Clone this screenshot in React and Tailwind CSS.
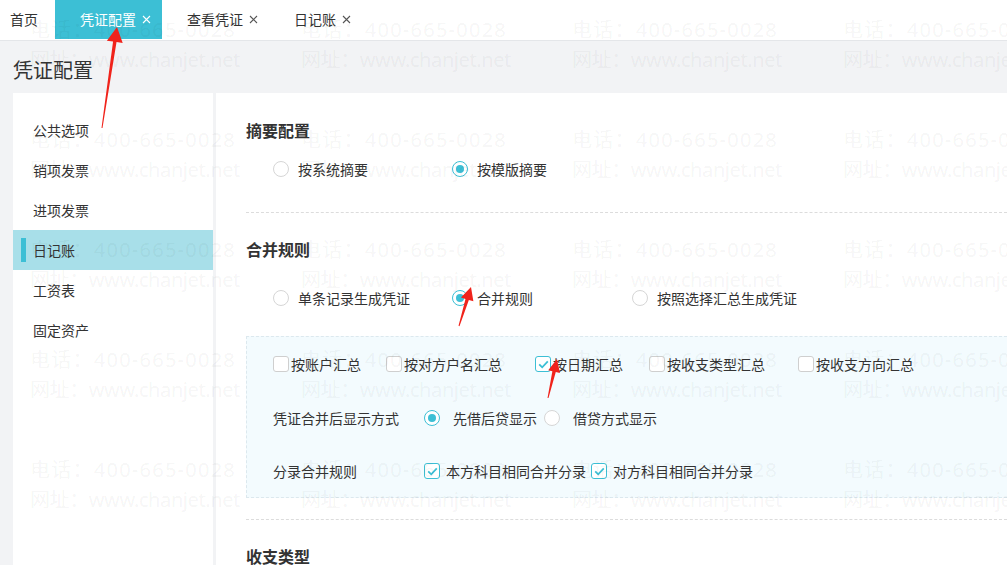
import React from 'react';

const CYAN = '#3cbfd5';

const Close = ({ color = '#555' }) => (
  <svg width="9" height="9" viewBox="0 0 9 9" className="ml-[6px]">
    <path d="M1 1L8 8M8 1L1 8" stroke={color} strokeWidth="1.1" />
  </svg>
);

const Radio = ({ checked }) => (
  <span
    className={`flex h-[16px] w-[16px] shrink-0 items-center justify-center rounded-full border bg-white ${
      checked ? 'border-[#3cbfd5]' : 'border-[#d6d6d6]'
    }`}
  >
    {checked && <span className="h-[8px] w-[8px] rounded-full bg-[#3cbfd5]" />}
  </span>
);

const Check = ({ checked }) => (
  <span
    className={`flex h-[16px] w-[16px] shrink-0 items-center justify-center rounded-[3px] border bg-white ${
      checked ? 'border-[#3cbfd5]' : 'border-[#cfcfcf]'
    }`}
  >
    {checked && (
      <svg width="11" height="9" viewBox="0 0 11 9">
        <path d="M1.2 4.4L4.2 7.3L9.8 1.4" fill="none" stroke={CYAN} strokeWidth="1.8" />
      </svg>
    )}
  </span>
);

const RadioOpt = ({ checked, label, w = 'w-[179px]' }) => (
  <div className={`flex items-center ${w}`}>
    <Radio checked={checked} />
    <span className="ml-[9px]">{label}</span>
  </div>
);

// red annotation arrow: tip, base, head length, half head width
const arrowPoints = (tx, ty, bx, by, hl, hw, neck, tail) => {
  const dx = tx - bx;
  const dy = ty - by;
  const len = Math.hypot(dx, dy);
  const ux = dx / len;
  const uy = dy / len;
  const px = -uy;
  const py = ux;
  const nx = tx - ux * hl;
  const ny = ty - uy * hl;
  const pts = [
    [tx, ty],
    [nx + px * hw, ny + py * hw],
    [nx + px * neck * 0.5, ny + py * neck * 0.5],
    [bx + px * tail * 0.5, by + py * tail * 0.5],
    [bx - px * tail * 0.5, by - py * tail * 0.5],
    [nx - px * neck * 0.5, ny - py * neck * 0.5],
    [nx - px * hw, ny - py * hw],
  ];
  return pts.map((p) => p.join(',')).join(' ');
};

const Arrows = () => (
  <svg className="pointer-events-none absolute inset-0" width="1007" height="565">
    <polygon points={arrowPoints(117, 27, 102, 128, 15, 8, 3.5, 1)} fill="#f0231b" />
    <polygon points={arrowPoints(471, 287, 459, 326, 13, 6.5, 3.5, 1)} fill="#f0231b" />
    <polygon points={arrowPoints(557, 359, 548, 398, 13, 6, 3.5, 1)} fill="#f0231b" />
  </svg>
);

const Watermark = () => {
  const cols = [30, 301, 572, 843];
  const rows = [15, 125, 235, 345, 455];
  return (
    <div className="pointer-events-none absolute inset-0 overflow-hidden text-[20px] leading-[30px] text-black/[0.055] [font-family:'Noto_Sans','Noto_Sans_CJK_SC',sans-serif]">
      {rows.map((y) =>
        cols.map((x) => (
          <div key={`${x}-${y}`} className="absolute whitespace-nowrap" style={{ left: x, top: y }}>
            <div className="tracking-[1.25px]">电话：400-665-0028</div>
            <div className="tracking-[-0.4px]">网址：www.chanjet.net</div>
          </div>
        ))
      )}
    </div>
  );
};

const sideItems = ['公共选项', '销项发票', '进项发票', '日记账', '工资表', '固定资产'];

export default function App() {
  return (
    <div className="relative h-[565px] w-[1007px] overflow-hidden bg-[#f2f3f5] text-[14px] text-[#333] [font-family:'Noto_Sans_CJK_SC','Noto_Sans',sans-serif]">
      {/* tabs */}
      <div className="flex h-[41px] items-stretch border-b border-[#e4e6e9] bg-white">
        <div className="flex h-[39px] items-center pl-[10px] pr-[17px]">首页</div>
        <div className="flex h-[39px] items-center bg-[#3cbfd5] pl-[25px] pr-[11px] text-white">
          凭证配置
          <Close color="#fff" />
        </div>
        <div className="flex h-[39px] items-center pl-[25px] pr-[11px]">
          查看凭证
          <Close />
        </div>
        <div className="flex h-[39px] items-center pl-[25px] pr-[11px]">
          日记账
          <Close />
        </div>
      </div>

      <div className="flex h-[52px] items-center pl-[13px] pt-[6px] text-[20px]">凭证配置</div>

      <div className="flex h-[472px] gap-[3px] pl-[13px]">
        {/* sidebar */}
        <div className="w-[200px] bg-white pt-[17px]">
          {sideItems.map((s) => (
            <div
              key={s}
              className={`relative flex h-[40px] items-center pl-[20px] ${s === '日记账' ? 'bg-[#a8dfe9]' : ''}`}
            >
              {s === '日记账' && <span className="absolute left-[8px] top-[8px] h-[24px] w-[5px] bg-[#3cbfd5]" />}
              {s}
            </div>
          ))}
        </div>

        {/* main */}
        <div className="flex-1 bg-white pl-[30px] pt-[26px]">
          <div className="text-[16px] font-bold leading-[22px]">摘要配置</div>
          <div className="mt-[18px] flex h-[20px] items-center pl-[27px]">
            <RadioOpt label="按系统摘要" />
            <RadioOpt checked label="按模版摘要" />
          </div>
          <div className="mt-[33px] border-t border-dashed border-[#dcdcdc]" />

          <div className="mt-[25px] text-[16px] font-bold leading-[22px]">合并规则</div>
          <div className="mt-[28px] flex h-[20px] items-center pl-[27px]">
            <RadioOpt label="单条记录生成凭证" />
            <RadioOpt checked label="合并规则" w="w-[180px]" />
            <RadioOpt label="按照选择汇总生成凭证" w="w-[200px]" />
          </div>

          <div className="mt-[28px] h-[162px] border border-r-0 border-dashed border-[#dce8ee] bg-[#f3fbfe] pl-[26px] pt-[17px]">
            <div className="flex h-[20px] items-center">
              <div className="flex w-[113px] items-center gap-[2px]">
                <Check />
                按账户汇总
              </div>
              <div className="flex w-[149px] items-center gap-[2px]">
                <Check />
                按对方户名汇总
              </div>
              <div className="flex w-[114px] items-center gap-[2px]">
                <Check checked />
                按日期汇总
              </div>
              <div className="flex w-[149px] items-center gap-[2px]">
                <Check />
                按收支类型汇总
              </div>
              <div className="flex items-center gap-[2px]">
                <Check />
                按收支方向汇总
              </div>
            </div>

            <div className="mt-[34px] flex h-[20px] items-center">
              <span className="w-[151px]">凭证合并后显示方式</span>
              <Radio checked />
              <span className="ml-[13px] mr-[7px]">先借后贷显示</span>
              <Radio />
              <span className="ml-[13px]">借贷方式显示</span>
            </div>

            <div className="mt-[33px] flex h-[20px] items-center">
              <span className="w-[151px]">分录合并规则</span>
              <Check checked />
              <span className="ml-[6px] mr-[5px]">本方科目相同合并分录</span>
              <Check checked />
              <span className="ml-[6px]">对方科目相同合并分录</span>
            </div>
          </div>

          <div className="mt-[21px] border-t border-dashed border-[#dcdcdc]" />
          <div className="mt-[25px] text-[16px] font-bold leading-[22px]">收支类型</div>
        </div>
      </div>

      <Watermark />
      <Arrows />
    </div>
  );
}
